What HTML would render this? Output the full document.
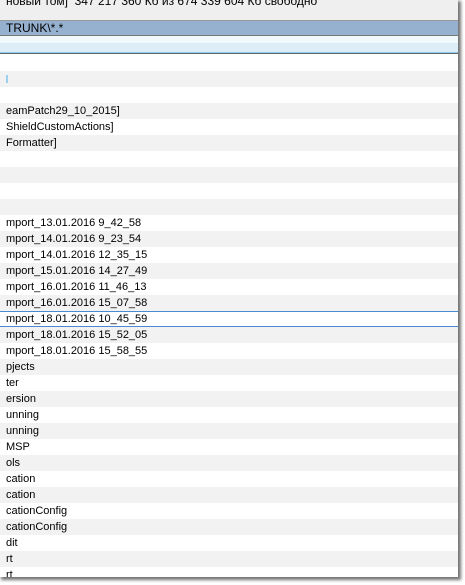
<!DOCTYPE html><html><head><style>
body{margin:0;width:465px;height:585px;background:#fff;overflow:hidden;position:relative;font-family:"Liberation Sans","DejaVu Sans",sans-serif;font-size:11px;color:#000}
#win{position:absolute;left:0;top:0;width:458px;height:577px;overflow:hidden;background:#fff;box-shadow:2px 2px 3px 1px rgba(0,0,0,.55)}
.top{position:absolute;left:0;top:0;width:458px;height:20px;background:#efefef;border-bottom:1px solid #999}
.top span{position:absolute;left:6px;top:-6px;font-size:12px}
.hdr{position:absolute;left:0;top:21px;width:458px;height:14px;background:#96b0cf;border-bottom:1px solid #777}
.hdr span{position:absolute;left:6px;top:0;font-size:12px}
.b1{position:absolute;left:0;top:36px;width:458px;height:7px;background:#f2f9fc}
.b2{position:absolute;left:0;top:43px;width:458px;height:9px;background:#dcedf8;border-bottom:1px solid #8ccbea}
.b3{position:absolute;left:0;top:53px;width:458px;height:1px;background:#666}
.r{position:absolute;left:0;width:458px;height:16px;line-height:16px;white-space:nowrap}
.r span{position:absolute;left:6px}
.g{background:#f2f2f2}
.sel{border-top:1px solid #4a8ad0;border-bottom:1px solid #4a8ad0;height:14px;line-height:14px}
</style></head><body><div id="win">
<div class="top"><span>новый том]&nbsp; 347 217 360 Кб из 674 339 604 Кб свободно</span></div>
<div class="hdr"><span>TRUNK\*.*</span></div>
<div class="b1"></div><div class="b2"></div><div class="b3"></div>
<div class="r" style="top:55px"></div>
<div class="r g" style="top:71px"><span style="left:6px;top:4px;height:8px;width:2px;background:#9cd0f0;"></span></div>
<div class="r" style="top:87px"></div>
<div class="r g" style="top:103px"><span>eamPatch29_10_2015]</span></div>
<div class="r" style="top:119px"><span>ShieldCustomActions]</span></div>
<div class="r g" style="top:135px"><span>Formatter]</span></div>
<div class="r" style="top:151px"></div>
<div class="r g" style="top:167px"></div>
<div class="r" style="top:183px"></div>
<div class="r g" style="top:199px"></div>
<div class="r" style="top:215px"><span>mport_13.01.2016 9_42_58</span></div>
<div class="r g" style="top:231px"><span>mport_14.01.2016 9_23_54</span></div>
<div class="r" style="top:247px"><span>mport_14.01.2016 12_35_15</span></div>
<div class="r g" style="top:263px"><span>mport_15.01.2016 14_27_49</span></div>
<div class="r" style="top:279px"><span>mport_16.01.2016 11_46_13</span></div>
<div class="r g" style="top:295px"><span>mport_16.01.2016 15_07_58</span></div>
<div class="r sel" style="top:311px"><span>mport_18.01.2016 10_45_59</span></div>
<div class="r g" style="top:327px"><span>mport_18.01.2016 15_52_05</span></div>
<div class="r" style="top:343px"><span>mport_18.01.2016 15_58_55</span></div>
<div class="r g" style="top:359px"><span>pjects</span></div>
<div class="r" style="top:375px"><span>ter</span></div>
<div class="r g" style="top:391px"><span>ersion</span></div>
<div class="r" style="top:407px"><span>unning</span></div>
<div class="r g" style="top:423px"><span>unning</span></div>
<div class="r" style="top:439px"><span>MSP</span></div>
<div class="r g" style="top:455px"><span>ols</span></div>
<div class="r" style="top:471px"><span>cation</span></div>
<div class="r g" style="top:487px"><span>cation</span></div>
<div class="r" style="top:503px"><span>cationConfig</span></div>
<div class="r g" style="top:519px"><span>cationConfig</span></div>
<div class="r" style="top:535px"><span>dit</span></div>
<div class="r g" style="top:551px"><span>rt</span></div>
<div class="r" style="top:567px"><span>rt</span></div>
</div></body></html>
